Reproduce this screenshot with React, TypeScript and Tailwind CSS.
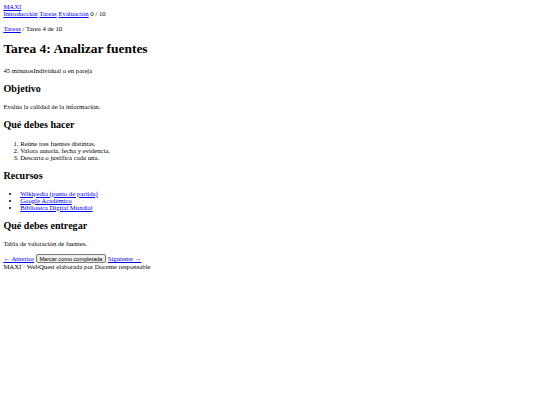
const link = "text-[#0000ee] underline";

export default function App() {
  return (
    <div className="p-[3.4px] font-['Liberation_Serif',serif] text-[6.72px] leading-[normal] text-black">
      <header>
        <div>
          <a href="#" className={link}>MAXI</a>
        </div>
        <nav>
          <a href="#" className={link}>Introducción</a>{" "}
          <a href="#" className={link}>Tareas</a>{" "}
          <a href="#" className={link}>Evaluación</a>{" "}
          <span>0 / 10</span>
        </nav>
      </header>

      <main>
        <p className="my-[7.2px]">
          <a href="#" className={link}>Tareas</a> / Tarea 4 de 10
        </p>
        <h1 className="my-[9.8px] text-[13.44px] font-bold leading-[normal]">Tarea 4: Analizar fuentes</h1>
        <p className="my-[7.3px]">
          <span>45 minutos</span>
          <span>Individual o en pareja</span>
        </p>

        <h2 className="my-[9.1px] text-[10.08px] font-bold leading-[normal]">Objetivo</h2>
        <p className="my-[7.3px]">Evalúa la calidad de la información.</p>

        <h2 className="my-[9.1px] text-[10.08px] font-bold leading-[normal]">Qué debes hacer</h2>
        <ol className="my-[7.3px] list-decimal pl-[16.8px]">
          <li>Reúne tres fuentes distintas.</li>
          <li>Valora autoría, fecha y evidencia.</li>
          <li>Descarta o justifica cada una.</li>
        </ol>

        <h2 className="my-[9.1px] text-[10.08px] font-bold leading-[normal]">Recursos</h2>
        <ul className="my-[7.3px] list-disc pl-[16.8px]">
          <li><a href="#" className={link}>Wikipedia (punto de partida)</a></li>
          <li><a href="#" className={link}>Google Académico</a></li>
          <li><a href="#" className={link}>Biblioteca Digital Mundial</a></li>
        </ul>

        <h2 className="my-[9.1px] text-[10.08px] font-bold leading-[normal]">Qué debes entregar</h2>
        <p className="my-[7.3px]">Tabla de valoración de fuentes.</p>

        <div>
          <a href="#" className={link}>← Anterior</a>{" "}
          <button className="rounded-[2px] border-[0.5px] border-[#767676] bg-[#efefef] px-[2.5px] py-[0.5px] font-['Liberation_Sans',sans-serif] text-[5.6px] leading-[normal]">
            Marcar como completada
          </button>{" "}
          <a href="#" className={link}>Siguiente →</a>
        </div>
      </main>

      <footer>MAXI · WebQuest elaborada por Docente responsable</footer>
    </div>
  );
}
